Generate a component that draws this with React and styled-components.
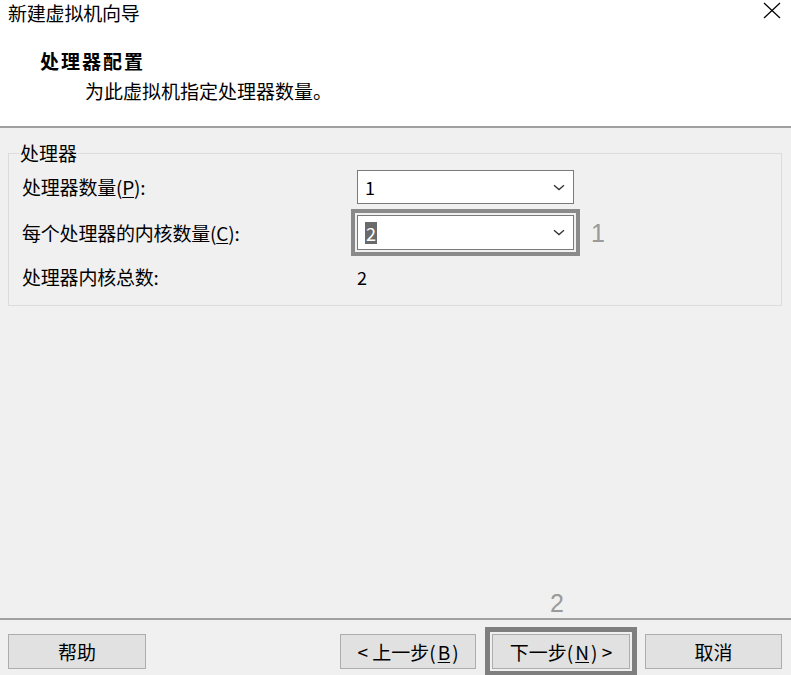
import React from "react";
import styled, { createGlobalStyle } from "styled-components";

const Global = createGlobalStyle`
  html, body { margin: 0; padding: 0; background: #f0f0f0; }
  body { font-family: "Noto Sans CJK SC", "Noto Sans", sans-serif; color: #000; }
  * { box-sizing: border-box; }
`;

const Window = styled.div`
  width: 791px;
  height: 675px;
  display: flex;
  flex-direction: column;
  background: #f0f0f0;
  overflow: hidden;
  font-size: 19px;
`;

const Header = styled.header`
  background: #fff;
  height: 128px;
  border-bottom: 2px solid #a0a0a0;
  display: flex;
  flex-direction: column;
`;

const TitleBar = styled.div`
  height: 26px;
  display: flex;
  align-items: center;
  justify-content: space-between;
  padding: 0 9px 0 8px;
`;

const Title = styled.span`
  font-size: 19px;
  line-height: 26px;
  letter-spacing: -0.2px;
`;

const CloseButton = styled.div`
  width: 20px;
  height: 20px;
  display: flex;
  align-items: center;
  justify-content: center;
  margin-top: -5px;
`;

const Heading = styled.div`
  margin: 23px 0 0 40px;
  font-weight: 700;
  font-size: 19px;
  line-height: 24px;
  letter-spacing: 2px;
`;

const Subtitle = styled.div`
  margin: 6px 0 0 85px;
  font-size: 19px;
  line-height: 24px;
  letter-spacing: 0;
`;

const Main = styled.main`
  flex: 1;
  padding: 14px 9px 0 8px;
`;

const Group = styled.fieldset`
  margin: 0;
  border: 1px solid #dcdcdc;
  padding: 6px 8px 12px 13px;
`;

const Legend = styled.legend`
  padding: 0 1px;
  margin-left: -3px;
  font-size: 19px;
  line-height: 22px;
`;

const Rows = styled.div`
  display: grid;
  grid-template-columns: 335px 217px auto;
  grid-template-rows: 34px 35px 32px;
  row-gap: 11px;
  align-items: center;
`;

const Label = styled.div`
  font-size: 19px;
  line-height: 22px;
  letter-spacing: -0.2px;
`;

const Value = styled.div`
  font-size: 18px;
  line-height: 22px;
`;

const Select = styled.div`
  height: 100%;
  background: #fff;
  border: 1px solid #7a7a7a;
  display: flex;
  align-items: center;
  justify-content: space-between;
  padding: 0 8px 0 7px;
  font-size: 18px;
  outline: ${(p) => (p.$marked ? "4px solid #8a8a8a" : "none")};
  outline-offset: 2px;
`;

const Selected = styled.span`
  background: #6a6a6a;
  color: #fff;
  padding: 0 1px;
  line-height: 22px;
`;

const Note = styled.span`
  font-family: "Liberation Sans", "DejaVu Sans", sans-serif;
  font-size: 25px;
  color: #9a9a9a;
  line-height: 28px;
`;

const RowNote = styled(Note)`
  margin-left: 17px;
`;

const Footer = styled.footer`
  position: relative;
  border-top: 2px solid #a0a0a0;
  padding: 14px 9px 6px 8px;
  display: flex;
  align-items: center;
`;

const FooterNote = styled(Note)`
  position: absolute;
  left: 550px;
  top: -31px;
`;

const Spacer = styled.div`
  flex: 1;
`;

const Button = styled.button`
  width: ${(p) => p.$w || 138}px;
  height: 35px;
  margin-left: ${(p) => p.$ml || 0}px;
  background: #e1e1e1;
  border: 1px solid #adadad;
  font-family: "Noto Sans CJK SC", "Noto Sans", sans-serif;
  font-size: 19px;
  color: #000;
  padding: 0;
  display: flex;
  align-items: center;
  justify-content: center;
  gap: 2px;
  outline: ${(p) => (p.$marked ? "5px solid #7f7f7f" : "none")};
  outline-offset: 2px;
`;

const U = styled.span`
  text-decoration: underline;
  text-underline-offset: 2px;
`;

const Chevron = () => (
  <svg width="12" height="7" viewBox="0 0 12 7">
    <path d="M1 1.2 L6 5.6 L11 1.2" fill="none" stroke="#333" strokeWidth="1.3" />
  </svg>
);

const CloseIcon = () => (
  <svg width="18" height="17" viewBox="0 0 18 17">
    <path d="M1 1 L17 16 M17 1 L1 16" stroke="#000" strokeWidth="1.2" fill="none" />
  </svg>
);

export default function App() {
  return (
    <Window>
      <Global />
      <Header>
        <TitleBar>
          <Title>新建虚拟机向导</Title>
          <CloseButton>
            <CloseIcon />
          </CloseButton>
        </TitleBar>
        <Heading>处理器配置</Heading>
        <Subtitle>为此虚拟机指定处理器数量。</Subtitle>
      </Header>
      <Main>
        <Group>
          <Legend>处理器</Legend>
          <Rows>
            <Label>
              处理器数量(<U>P</U>):
            </Label>
            <Select>
              <span>1</span>
              <Chevron />
            </Select>
            <span />
            <Label>
              每个处理器的内核数量(<U>C</U>):
            </Label>
            <Select $marked>
              <Selected>2</Selected>
              <Chevron />
            </Select>
            <RowNote>1</RowNote>
            <Label>处理器内核总数:</Label>
            <Value>2</Value>
            <span />
          </Rows>
        </Group>
      </Main>
      <Footer>
        <FooterNote>2</FooterNote>
        <Button $w={138}>帮助</Button>
        <Spacer />
        <Button $w={136}>
          &lt; 上一步(<U>B</U>)
        </Button>
        <Button $w={138} $ml={16} $marked>
          下一步(<U>N</U>) &gt;
        </Button>
        <Button $w={137} $ml={15}>取消</Button>
      </Footer>
    </Window>
  );
}
